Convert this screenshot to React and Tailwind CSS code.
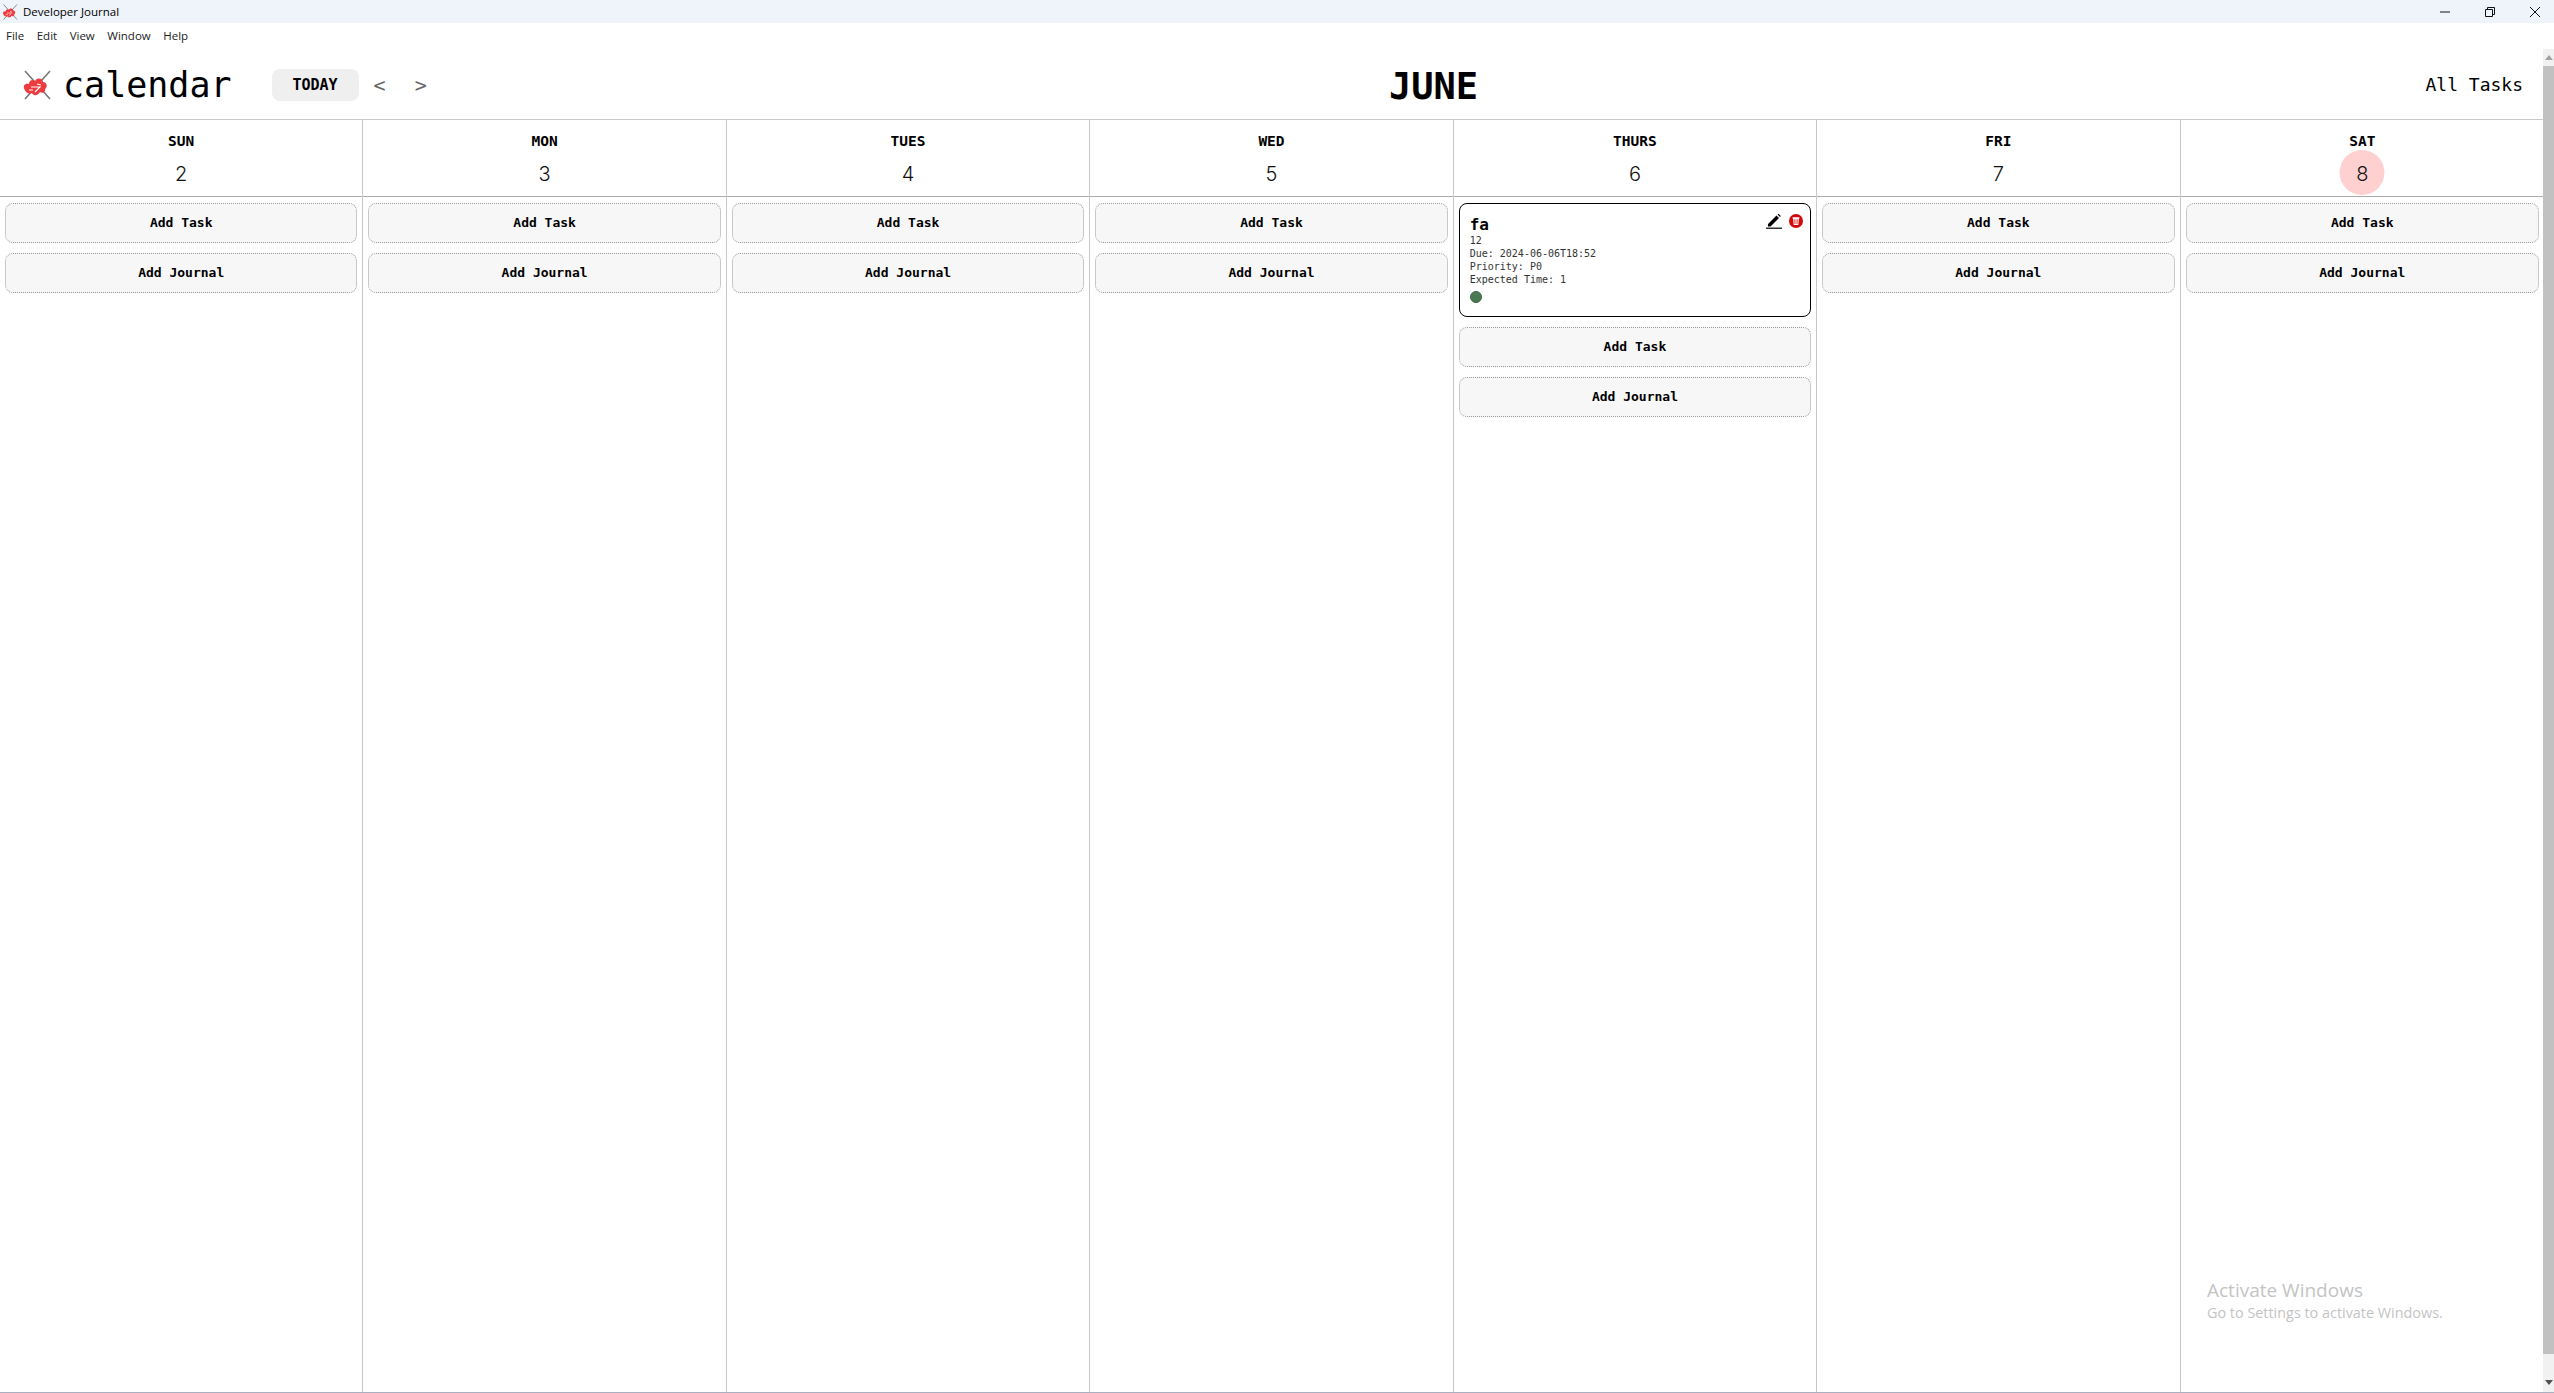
const mono = { fontFamily: '"DejaVu Sans Mono", "Liberation Mono", monospace' };
const ui = { fontFamily: '"Open Sans", "Noto Sans", sans-serif' };

function Logo({ className }) {
  return (
    <svg viewBox="0 0 28 30" className={className}>
      <path d="M2 1 L27 29 M27 1 L2 29" stroke="#777" strokeWidth="1.6" fill="none" />
      <path d="M1 18 C0 15 3 13 6 14 C6 10 10 9 12 11 C14 7 20 8 20 12 C24 12 25 17 22 19 C23 22 19 24 17 22 C15 26 10 26 9 23 C6 25 2 22 1 18 Z" fill="#ee3b3f" />
      <path d="M8 17 H17 L12 22 M14 14 L18 15 M6 20 H10" stroke="#fff" strokeWidth="1.1" fill="none" />
    </svg>
  );
}

function AddButton({ children }) {
  return (
    <button className="h-10 w-full rounded-lg border border-dotted border-[#999] bg-[#f7f7f7] text-[13px] font-bold text-black">
      {children}
    </button>
  );
}

function TaskCard() {
  return (
    <div className="relative h-[114px] rounded-lg border border-black bg-white px-[10px] pt-[11px]">
      <div className="flex h-[19px] items-center text-[16px] leading-none font-bold text-black">fa</div>
      <div className="text-[10px] leading-[13px] text-[#333]">12</div>
      <div className="text-[10px] leading-[13px] text-[#333]">Due: 2024-06-06T18:52</div>
      <div className="text-[10px] leading-[13px] text-[#333]">Priority: P0</div>
      <div className="text-[10px] leading-[13px] text-[#333]">Expected Time: 1</div>
      <div className="mt-[5px] h-3 w-3 rounded-full border border-[#3d6446] bg-[#4a7a54]" />
      <div className="absolute top-[9px] right-[7px] flex items-center gap-[7px]">
        <svg viewBox="0 0 16 16" className="h-4 w-4">
          <path d="M2 11 L10.5 2.5 L13 5 L4.5 13.5 L2 13.5 Z M11.5 1.5 L12.5 0.8 L14.8 3 L14 4" fill="#000" />
          <rect x="0" y="14.6" width="16" height="1.2" fill="#000" />
        </svg>
        <svg viewBox="0 0 14 14" className="h-[14px] w-[14px]">
          <circle cx="7" cy="7" r="7" fill="#d10a0a" />
          <path d="M3.6 3.2 H10.4 V4.4 H9.9 L9.3 11 H4.7 L4.1 4.4 H3.6 Z" fill="#fff" />
          <path d="M5.5 5.2 L5.8 10 M7 5.2 V10 M8.5 5.2 L8.2 10" stroke="#d10a0a" strokeWidth="0.6" />
        </svg>
      </div>
    </div>
  );
}

const days = [
  ["SUN", 2], ["MON", 3], ["TUES", 4], ["WED", 5], ["THURS", 6], ["FRI", 7], ["SAT", 8],
];

function Column({ name, num }) {
  return (
    <div className="flex min-w-0 flex-col border-r border-[#c8c8c8] last:border-r-0">
      <div className="relative h-[77px] border-b border-[#a9a9a9] text-center text-black">
        <div className="pt-[11px] text-[14.5px] leading-[20px] font-bold">{name}</div>
        {num === 8 && (
          <div className="absolute top-[30px] left-1/2 h-[45px] w-[45px] -translate-x-1/2 rounded-full bg-[#ffd0d0]" />
        )}
        <div
          className="relative mt-[9px] text-[20px] leading-[28px] font-light text-[#111]"
          style={{ fontFamily: 'Inter, "Liberation Sans", sans-serif' }}
        >
          {num}
        </div>
      </div>
      <div className="flex flex-col gap-[10px] px-[5px] pt-[6px]">
        {num === 6 && <TaskCard />}
        <AddButton>Add Task</AddButton>
        <AddButton>Add Journal</AddButton>
      </div>
    </div>
  );
}

export default function App() {
  return (
    <div className="relative flex h-[1393px] w-full flex-col overflow-hidden bg-white" style={mono}>
      <div className="flex h-[23px] items-center justify-between bg-[#eff3fa] pl-[2px] text-[11.5px] text-black" style={ui}>
        <div className="flex items-center gap-[5px]">
          <Logo className="h-4 w-4" />
          <span>Developer Journal</span>
        </div>
        <div className="flex items-center gap-[35px] pr-[14px]">
          <svg viewBox="0 0 10 10" className="h-[10px] w-[10px]"><path d="M0 5 H10" stroke="#111" strokeWidth="1" /></svg>
          <svg viewBox="0 0 10 10" className="h-[10px] w-[10px]"><path d="M0.5 2.5 H7.5 V9.5 H0.5 Z M2.5 2.5 V0.5 H9.5 V7.5 H7.5" stroke="#111" strokeWidth="1" fill="none" /></svg>
          <svg viewBox="0 0 10 10" className="h-[10px] w-[10px]"><path d="M0 0 L10 10 M10 0 L0 10" stroke="#111" strokeWidth="1" /></svg>
        </div>
      </div>
      <div className="flex h-[25px] items-center gap-[12.5px] pl-[6px] text-[11.5px] text-[#222]" style={ui}>
        <span>File</span>
        <span>Edit</span>
        <span>View</span>
        <span>Window</span>
        <span>Help</span>
      </div>
      <div className="flex min-h-0 flex-1 border-b border-[#a9b0c0]">
        <div className="-mr-px flex min-w-0 flex-1 flex-col">
          <div className="relative flex h-[72px] items-center border-b border-[#c8c8c8] pt-[2px] pr-[21px] pl-[23px] text-black">
            <Logo className="h-[30px] w-[28px]" />
            <span className="mt-[2px] ml-[12px] text-[35px] leading-none">calendar</span>
            <button className="ml-[40px] h-[32px] w-[87px] rounded-lg bg-[#efefef] pt-px text-[15px] font-bold">TODAY</button>
            <span className="ml-[15px] text-[20px] font-light text-[#666]">&lt;</span>
            <span className="ml-[29px] text-[20px] font-light text-[#666]">&gt;</span>
            <span className="absolute left-[1389px] mt-[3px] text-[37px] leading-none font-bold">JUNE</span>
            <span className="ml-auto text-[18px]">All Tasks</span>
          </div>
          <div className="grid min-h-0 flex-1 grid-cols-7">
            {days.map(([n, d]) => (
              <Column key={n} name={n} num={d} />
            ))}
          </div>
        </div>
        <div className="relative mt-px flex w-[11px] flex-col items-center bg-[#f1f1f1]">
          <div className="flex h-[17px] items-center">
            <svg viewBox="0 0 8 5" className="h-[5px] w-2"><path d="M4 0 L8 5 H0 Z" fill="#a3a3a3" /></svg>
          </div>
          <div className="w-full flex-1 bg-[#c1c1c1]" />
          <div className="flex h-[38px] items-end pb-[7px]">
            <svg viewBox="0 0 8 5" className="h-[5px] w-2"><path d="M0 0 H8 L4 5 Z" fill="#505050" /></svg>
          </div>
        </div>
      </div>
      <div className="absolute top-[1278px] left-[2207px] text-[#c4c4c4]" style={ui}>
        <div className="text-[19px] leading-[24px]">Activate Windows</div>
        <div className="text-[14.4px] leading-[21px]">Go to Settings to activate Windows.</div>
      </div>
    </div>
  );
}
